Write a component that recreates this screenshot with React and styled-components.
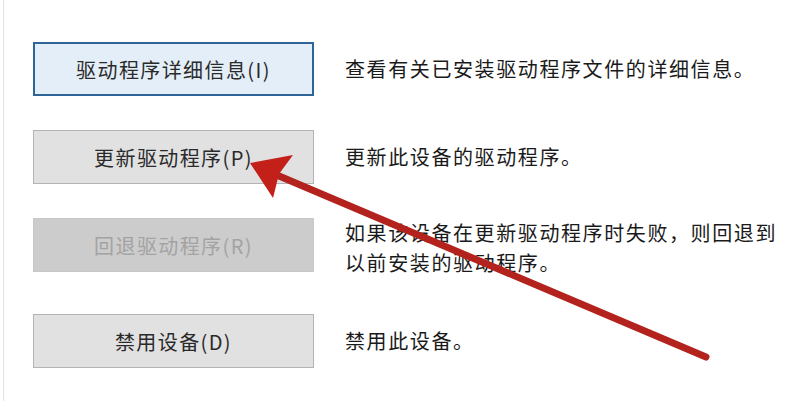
import React from "react";
import styled, { createGlobalStyle } from "styled-components";

const GlobalStyle = createGlobalStyle`
  html, body {
    margin: 0;
    padding: 0;
    background: #ffffff;
  }
  body {
    font-family: "Noto Sans CJK SC", "Microsoft YaHei", sans-serif;
  }
`;

const Page = styled.div`
  position: relative;
  width: 800px;
  height: 401px;
  overflow: hidden;
  background: #fff;
  box-sizing: border-box;
  border-left: 1px solid #e2e2e2;
  margin-left: 3px;
  padding: 42px 0 0 29px;
`;

const Grid = styled.div`
  display: grid;
  grid-template-columns: 281px 1fr;
  column-gap: 31px;
  row-gap: 34px;
  align-items: start;
`;

const ActionButton = styled.button`
  box-sizing: border-box;
  width: 281px;
  height: 54px;
  margin: 0;
  padding: 0;
  font-family: "Noto Sans CJK SC", sans-serif;
  font-size: 20px;
  letter-spacing: 1.4px;
  color: ${(p) => (p.$disabled ? "#a3a3a3" : "#2a2a2a")};
  background: ${(p) =>
    p.$focused ? "#e3eef8" : p.$disabled ? "#cccccc" : "#e1e1e1"};
  border: ${(p) =>
    p.$focused
      ? "2px solid #2f6496"
      : p.$disabled
      ? "1px solid #c8c8c8"
      : "1px solid #b4b4b4"};
  cursor: default;
`;

const Description = styled.div`
  font-size: 20px;
  letter-spacing: 1.6px;
  line-height: 30px;
  color: #1a1a1a;
  min-height: 54px;
  display: flex;
  align-items: ${(p) => (p.$multi ? "flex-start" : "center")};
  margin-bottom: ${(p) => (p.$multi ? "2px" : "0")};
`;

const Arrow = styled.svg`
  position: absolute;
  left: -4px;
  top: 0;
  pointer-events: none;
`;

const rows = [
  {
    label: "驱动程序详细信息(I)",
    lines: ["查看有关已安装驱动程序文件的详细信息。"],
    focused: true,
  },
  { label: "更新驱动程序(P)", lines: ["更新此设备的驱动程序。"] },
  {
    label: "回退驱动程序(R)",
    lines: ["如果该设备在更新驱动程序时失败，则回退到", "以前安装的驱动程序。"],
    disabled: true,
  },
  { label: "禁用设备(D)", lines: ["禁用此设备。"] },
];

export default function App() {
  return (
    <>
      <GlobalStyle />
      <Page>
        <Grid>
          {rows.map((r) => (
            <React.Fragment key={r.label}>
              <ActionButton $focused={r.focused} $disabled={r.disabled}>
                {r.label}
              </ActionButton>
              <Description $multi={r.lines.length > 1}>
                <span>
                  {r.lines.map((l, i) => (
                    <React.Fragment key={i}>
                      {i > 0 && <br />}
                      {l}
                    </React.Fragment>
                  ))}
                </span>
              </Description>
            </React.Fragment>
          ))}
        </Grid>
        <Arrow width="800" height="401" viewBox="0 0 800 401">
          <line
            x1="706"
            y1="357"
            x2="272"
            y2="173"
            stroke="#b3221c"
            strokeWidth="7"
            strokeLinecap="round"
          />
          <polygon points="250,163 293,155 279,174 273,198" fill="#c4201a" />
        </Arrow>
      </Page>
    </>
  );
}
